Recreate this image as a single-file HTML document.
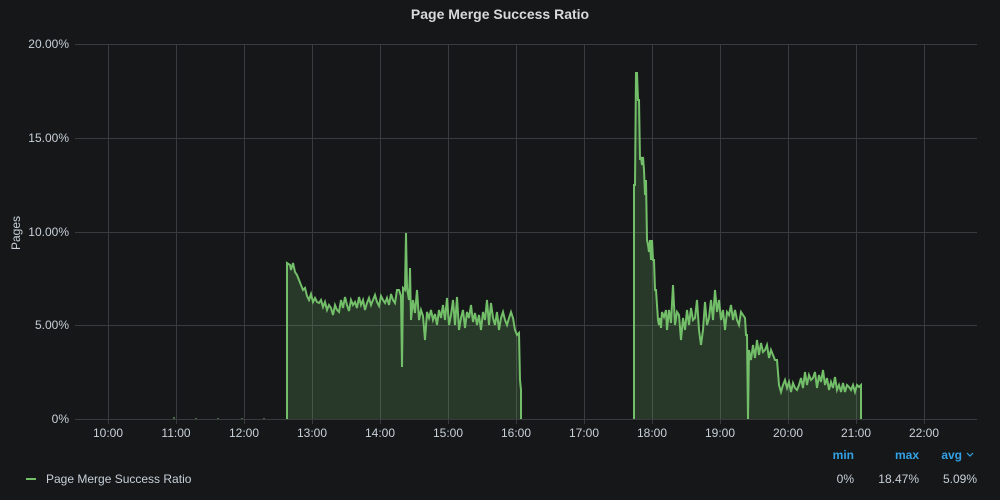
<!DOCTYPE html>
<html><head><meta charset="utf-8"><style>
html,body{margin:0;padding:0;background:#161719;width:1000px;height:500px;overflow:hidden;font-family:"Liberation Sans",sans-serif;}
.t{position:absolute;color:#c7d0d9;font-size:12px;}
</style></head><body>
<div class="t" style="left:0;width:1000px;top:6px;text-align:center;font-size:14px;font-weight:bold;color:#d8d9da">Page Merge Success Ratio</div>
<svg width="1000" height="500" style="position:absolute;left:0;top:0">
<g stroke="#3a3b3f" stroke-width="1">
<line x1="75" y1="44.5" x2="977" y2="44.5"/><line x1="75" y1="138.5" x2="977" y2="138.5"/><line x1="75" y1="232.5" x2="977" y2="232.5"/><line x1="75" y1="325.5" x2="977" y2="325.5"/><line x1="75" y1="419.5" x2="977" y2="419.5"/>
<line x1="108.5" y1="44" x2="108.5" y2="424"/><line x1="176.5" y1="44" x2="176.5" y2="424"/><line x1="244.5" y1="44" x2="244.5" y2="424"/><line x1="312.5" y1="44" x2="312.5" y2="424"/><line x1="380.5" y1="44" x2="380.5" y2="424"/><line x1="448.5" y1="44" x2="448.5" y2="424"/><line x1="516.5" y1="44" x2="516.5" y2="424"/><line x1="584.5" y1="44" x2="584.5" y2="424"/><line x1="652.5" y1="44" x2="652.5" y2="424"/><line x1="720.5" y1="44" x2="720.5" y2="424"/><line x1="788.5" y1="44" x2="788.5" y2="424"/><line x1="856.5" y1="44" x2="856.5" y2="424"/><line x1="924.5" y1="44" x2="924.5" y2="424"/>
</g>
<g fill="rgba(115,191,105,0.2)" stroke="#73bf69" stroke-width="2" stroke-linejoin="miter">
<polyline points="287,419 287,263 290,265 291,270 293,263 295,272 297,275 299,280 301,285 303,290 305,288 307,296 309,300 311,294 313,302 315,298 317,302 319,303 321,300 323,307 325,302 327,310 329,305 331,308 333,315 335,305 337,310 339,312 341,300 343,308 345,297 347,305 349,311 351,300 353,305 355,302 357,308 359,297 361,305 363,300 365,310 367,303 369,298 371,305 373,300 375,295 377,302 379,306 381,296 383,300 385,303 387,298 389,305 391,294 393,300 395,303 397,290 399,290 401,296 402,367 403,288 405,290 406,233 407,288 409,300 410,268 411,320 413,300 415,313 417,290 419,320 421,310 423,316 425,340 427,312 429,318 431,310 433,320 435,314 437,325 439,310 441,318 443,305 445,320 447,298 449,325 451,315 453,300 455,325 457,297 459,330 461,318 463,310 465,328 467,312 469,318 471,305 473,322 475,313 477,325 479,315 481,330 483,312 485,320 487,300 489,325 491,303 493,318 495,325 497,312 499,330 501,318 503,312 505,320 507,325 509,318 511,312 513,318 515,330 517,335 519,333 520,380 521,390 521,419"/>
<polyline points="634,419 634,185 635,185 636,73 637,73 638,100 639,100 640,160 641,157 642,165 643,157 644,170 645,195 646,180 647,240 648,245 649,252 650,240 651,260 652,240 653,260 654,260 655,290 656,290 657,305 658,320 659,325 660,318 661,328 662,312 664,317 666,310 667,330 669,310 671,323 673,285 675,325 677,312 679,315 681,340 683,318 685,330 687,310 689,325 691,308 693,320 695,318 697,300 699,330 701,345 703,330 705,302 707,325 709,318 711,300 713,320 715,290 717,312 719,300 721,320 723,310 725,330 727,312 729,315 731,305 733,320 735,310 737,320 739,325 741,312 743,315 745,318 746,335 747,335 748,419 749,350 751,360 753,345 755,358 757,340 759,355 761,343 763,352 765,350 767,345 769,358 771,350 773,355 775,360 777,360 779,385 781,392 783,385 785,380 787,388 789,382 791,392 793,383 795,388 797,390 799,385 801,378 803,388 805,372 807,385 809,375 811,380 813,378 815,372 817,388 819,375 821,382 823,370 825,385 827,378 829,390 831,382 833,388 835,377 837,390 839,385 841,392 843,383 845,392 847,385 849,387 851,390 853,385 855,392 857,385 859,387 861,385 861,419"/>
</g>
<g stroke="#73bf69" stroke-width="1"><line x1="174" y1="419" x2="174" y2="417"/><line x1="196" y1="419" x2="196" y2="418"/><line x1="218" y1="419" x2="218" y2="418"/><line x1="242" y1="419" x2="242" y2="418"/><line x1="264" y1="419" x2="264" y2="418"/></g>
<rect x="26" y="478" width="10" height="2" fill="#73bf69"/>
<path d="M967 453 l3 3 l3 -3" stroke="#33a2e5" stroke-width="1.2" fill="none"/>
</svg>
<div class="t" style="left:0;width:69px;text-align:right;top:37px">20.00%</div>
<div class="t" style="left:0;width:69px;text-align:right;top:131px">15.00%</div>
<div class="t" style="left:0;width:69px;text-align:right;top:225px">10.00%</div>
<div class="t" style="left:0;width:69px;text-align:right;top:318px">5.00%</div>
<div class="t" style="left:0;width:69px;text-align:right;top:412px">0%</div>
<div class="t" style="left:-4px;top:226px;transform:rotate(-90deg);width:40px;text-align:center">Pages</div>
<div class="t" style="left:88px;top:426px;width:40px;text-align:center">10:00</div>
<div class="t" style="left:156px;top:426px;width:40px;text-align:center">11:00</div>
<div class="t" style="left:224px;top:426px;width:40px;text-align:center">12:00</div>
<div class="t" style="left:292px;top:426px;width:40px;text-align:center">13:00</div>
<div class="t" style="left:360px;top:426px;width:40px;text-align:center">14:00</div>
<div class="t" style="left:428px;top:426px;width:40px;text-align:center">15:00</div>
<div class="t" style="left:496px;top:426px;width:40px;text-align:center">16:00</div>
<div class="t" style="left:564px;top:426px;width:40px;text-align:center">17:00</div>
<div class="t" style="left:632px;top:426px;width:40px;text-align:center">18:00</div>
<div class="t" style="left:700px;top:426px;width:40px;text-align:center">19:00</div>
<div class="t" style="left:768px;top:426px;width:40px;text-align:center">20:00</div>
<div class="t" style="left:836px;top:426px;width:40px;text-align:center">21:00</div>
<div class="t" style="left:904px;top:426px;width:40px;text-align:center">22:00</div>
<div class="t" style="left:46px;top:472px">Page Merge Success Ratio</div>
<div class="t" style="left:800px;width:54px;text-align:right;top:448px;color:#33a2e5;font-weight:bold">min</div>
<div class="t" style="left:860px;width:59px;text-align:right;top:448px;color:#33a2e5;font-weight:bold">max</div>
<div class="t" style="left:920px;width:42px;text-align:right;top:448px;color:#33a2e5;font-weight:bold">avg</div>
<div class="t" style="left:800px;width:54px;text-align:right;top:472px">0%</div>
<div class="t" style="left:860px;width:59px;text-align:right;top:472px">18.47%</div>
<div class="t" style="left:920px;width:57px;text-align:right;top:472px">5.09%</div>
</body></html>
